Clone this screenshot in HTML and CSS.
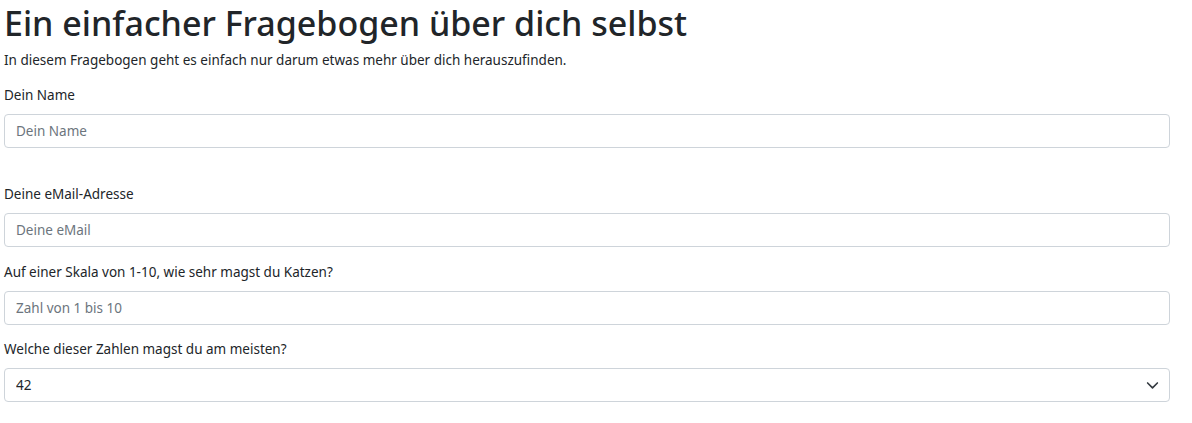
FILE: index.html
```html
<!DOCTYPE html>
<html lang="de">
<head>
<meta charset="utf-8">
<title>Fragebogen</title>
<link rel="stylesheet" href="styles.css">
</head>
<body>
<main class="page">
  <h1 class="title">Ein einfacher Fragebogen über dich selbst</h1>
  <p class="lead">In diesem Fragebogen geht es einfach nur darum etwas mehr über dich herauszufinden.</p>
  <form class="form">
    <div class="field field-spaced">
      <label class="label" for="name">Dein Name</label>
      <input class="control" id="name" type="text" placeholder="Dein Name">
    </div>
    <div class="field">
      <label class="label" for="mail">Deine eMail-Adresse</label>
      <input class="control" id="mail" type="email" placeholder="Deine eMail">
    </div>
    <div class="field">
      <label class="label" for="cats">Auf einer Skala von 1-10, wie sehr magst du Katzen?</label>
      <input class="control" id="cats" type="text" placeholder="Zahl von 1 bis 10">
    </div>
    <div class="field">
      <label class="label" for="num">Welche dieser Zahlen magst du am meisten?</label>
      <div class="select-wrap">
        <select class="control select" id="num">
          <option>42</option>
          <option>7</option>
          <option>13</option>
        </select>
        <svg class="chevron" width="13" height="10" viewBox="0 0 16 12" aria-hidden="true"><path d="M2 3.5l6 6 6-6" fill="none" stroke="#343a40" stroke-width="2" stroke-linecap="round" stroke-linejoin="round"/></svg>
      </div>
    </div>
  </form>
</main>
</body>
</html>
```

FILE: styles.css
```css
* { box-sizing: border-box; }
html, body { margin: 0; padding: 0; background: #fff; }
body {
  font-family: "Noto Sans", "Open Sans", sans-serif;
  font-size: 13.5px;
  line-height: 1.5;
  color: #212529;
}
.page {
  padding: 0 22px 0 4px;
}
.title {
  margin: 0 0 5px 0;
  padding-top: 3px;
  font-size: 34px;
  font-weight: 500;
  line-height: 1.2;
  color: #212529;
}
.lead {
  margin: 0 0 14.2px 0;
  line-height: 22px;
}
.form { display: flex; flex-direction: column; }
.field { margin-bottom: 14.4px; }
.field-spaced { margin-bottom: 36px; }
.label {
  display: block;
  line-height: 21.6px;
  margin-bottom: 7.2px;
}
.control {
  display: block;
  width: 100%;
  height: 34.4px;
  padding: 5px 11px;
  font-family: inherit;
  font-size: 13.5px;
  line-height: 22px;
  color: #212529;
  background: #fff;
  border: 1px solid #ced4da;
  border-radius: 4px;
  outline: none;
}
.control::placeholder { color: #6c757d; opacity: 1; }
.select-wrap { position: relative; }
.select {
  appearance: none;
  -webkit-appearance: none;
  padding-right: 36px;
}
.chevron {
  position: absolute;
  right: 11px;
  top: 12px;
  pointer-events: none;
}
```
